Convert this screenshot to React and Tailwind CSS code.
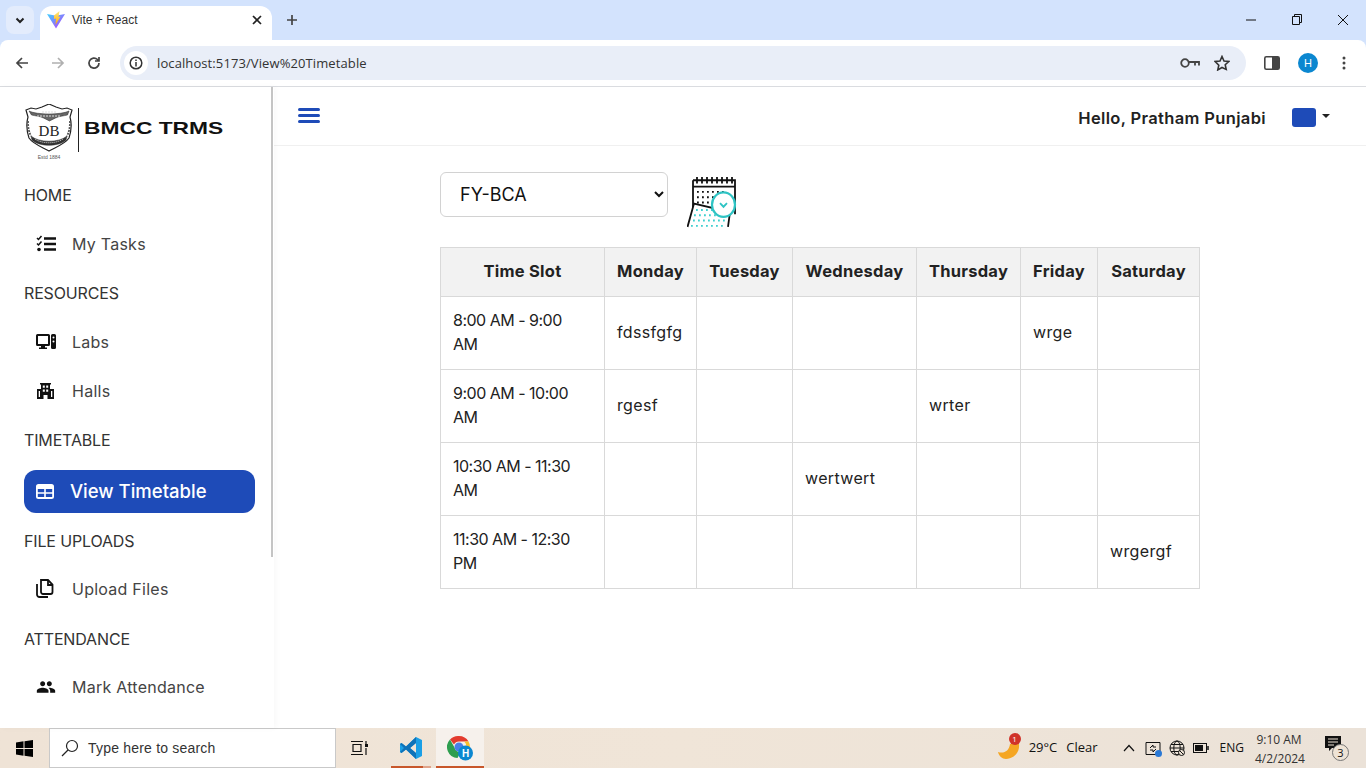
import React from "react";
import { MdPeople } from "react-icons/md";

const sans = "font-['Inter','Noto_Sans',sans-serif]";

const TaskIcon = () => (
  <svg width="20" height="18" viewBox="0 0 20 18" fill="none" stroke="#111">
    <path d="M1 3l1.5 1.5L5.5 1M1 8.5L2.5 10l3-3.5" strokeWidth="1.5" />
    <circle cx="3" cy="14.5" r="1.8" fill="#111" stroke="none" />
    <path d="M8 3.5h12M8 9h12M8 14.5h12" strokeWidth="2.4" />
  </svg>
);
const LabIcon = () => (
  <svg width="20" height="16" viewBox="0 0 20 16" fill="#111">
    <path fillRule="evenodd" d="M1.5 0h11A1.5 1.5 0 0 1 14 1.5v9a1.5 1.5 0 0 1-1.5 1.5H9v1.5h2V15H3v-1.500h2V12H1.500A1.500 1.500 0 0 1 0 10.500v-9A1.500 1.500 0 0 1 1.500 0zM2 2v8h10V2z" />
    <path fillRule="evenodd" d="M16.500 0h2A1.500 1.500 0 0 1 20 1.500v12a1.500 1.500 0 0 1-1.500 1.500h-2a1.500 1.500 0 0 1-1.500-1.500v-12A1.500 1.500 0 0 1 16.500 0zm1 2.500a1 1 0 1 0 0 2 1 1 0 0 0 0-2zm0 4a1 1 0 1 0 0 2 1 1 0 0 0 0-2z" />
  </svg>
);
const HallIcon = () => (
  <svg className="ml-[1px]" width="17" height="16" viewBox="0 0 17 16" fill="#111">
    <path fillRule="evenodd" d="M3 0h11v1.500h-1V6h4v10h-6.500v-4h-4v4H0V6h4V1.500H3zM5.800 2.500v2.300h2V2.500zm3.400 0v2.300h2V2.500zM5.800 6.500v2.300h2V6.500zm3.400 0v2.300h2V6.500zM1.700 8v6h1.300V8zm12.300 0v6h1.300V8z" />
  </svg>
);
const TableIcon = () => (
  <svg width="18" height="15" viewBox="0 0 18 15" fill="#fff">
    <path fillRule="evenodd" d="M2.500 0h13A2.500 2.500 0 0 1 18 2.500v10a2.500 2.500 0 0 1-2.500 2.500h-13A2.500 2.500 0 0 1 0 12.500v-10A2.500 2.500 0 0 1 2.500 0zM1.800 5v3.200h6.400V5zm8 0v3.200h6.400V5zM1.800 9.700V13h6.400V9.700zm8 0V13h6.400V9.700z" />
  </svg>
);
const FilesIcon = () => (
  <svg width="18" height="19" viewBox="0 0 18 19" fill="none" stroke="#111" strokeWidth="1.8">
    <path d="M5 1h7l4.500 4.500V13a2 2 0 0 1-2 2H7a2 2 0 0 1-2-2z" />
    <path d="M12 1v5h4.500" />
    <path d="M1 5v10.500A2.500 2.500 0 0 0 3.500 18H12" />
  </svg>
);

const Group = ({ children }) => (
  <div className="h-[49px] flex items-center pl-6 text-[16px] text-[#333] tracking-[-0.15px]">{children}</div>
);
const Item = ({ icon, children }) => (
  <div className="h-[49px] flex items-center pl-9 text-[16px] text-[#444] tracking-[0.25px]">
    <span className="w-9 flex items-center">{icon}</span>
    {children}
  </div>
);

const Crest = () => (
  <svg width="48" height="56" viewBox="0 0 48 56" fill="none" stroke="#222">
    <path d="M1 6l5-2 5 1 6-2 7-3 7 3 6 2 5-1 5 2-2 7c2 7 1 15-1 21-4 6-13 9-20 13C17 43 8 40 4 34 2 28 1 20 3 13z" strokeWidth="1.200" fill="#fff" />
    <path d="M4 7c8 4 32 4 40 0l-1.500 4c-4 1-8 1-12 3l-6 3-6-3c-4-2-8-2-12-3z" fill="#666" strokeWidth="0.500" />
    <path d="M17 8h14M12 12h24" stroke="#ddd" strokeWidth="1" strokeDasharray="2 1" />
    <text x="24" y="32" fontSize="15" fontFamily="Liberation Serif" fill="#222" stroke="none" textAnchor="middle">DB</text>
    <path d="M6 32c8 7 28 7 36 0l-1 4c-7 7-27 7-34 0z" fill="#333" strokeWidth="0.500" />
    <path d="M10 35c7 5 21 5 28 0" stroke="#ddd" strokeWidth="1" strokeDasharray="1 1" />
    <path d="M3 17c0 7 1 11 3 15M45 17c0 7-1 11-3 15" strokeWidth="1.800" stroke="#555" strokeDasharray="2 1" />
    <text x="24" y="55" fontSize="5" fill="#555" stroke="none" textAnchor="middle" fontFamily="Liberation Sans">Estd 1884</text>
  </svg>
);

const CalendarArt = () => (
  <svg className="block" width="50" height="52" viewBox="0 4 50 49" fill="none" preserveAspectRatio="none">
    <path d="M6 8h42v32" stroke="#111" strokeWidth="1.800" />
    <path d="M6 8v30M6 14h42" stroke="#111" strokeWidth="1.800" />
    <path d="M10 5v6M15 5v6M20 5v6M25 5v6M30 5v6M35 5v6M40 5v6M45 5v6" stroke="#111" strokeWidth="1.800" />
    <path d="M10 19h30M10 24h26M10 29h24M10 34h4" stroke="#111" strokeWidth="1.800" strokeDasharray="1.800 3.200" />
    <path d="M0.500 52L7 30l36 8-2 14" stroke="#111" strokeWidth="1.800" fill="#fff" />
    <path d="M9 36h28M7 41h32M6 46h33M4 51h34" stroke="#3fd0d0" strokeWidth="1.800" strokeDasharray="1.800 3.200" />
    <circle cx="36.500" cy="31" r="11.500" stroke="#2fc4c4" strokeWidth="2.200" fill="#fff" />
    <path d="M33 29.500l3.500 3.500 3.500-3.500" stroke="#2fc4c4" strokeWidth="1.800" />
  </svg>
);

const rows = [
  ["8:00 AM - 9:00 AM", "fdssfgfg", "", "", "", "wrge", ""],
  ["9:00 AM - 10:00 AM", "rgesf", "", "", "wrter", "", ""],
  ["10:30 AM - 11:30 AM", "", "", "wertwert", "", "", ""],
  ["11:30 AM - 12:30 PM", "", "", "", "", "", "wrgergf"],
];
const heads = ["Time Slot", "Monday", "Tuesday", "Wednesday", "Thursday", "Friday", "Saturday"];

const Favicon = () => (
  <svg width="18" height="18" viewBox="0 0 18 18">
    <defs>
      <linearGradient id="v1" x1="0" y1="0" x2="1" y2="1">
        <stop offset="0" stopColor="#41d1ff" />
        <stop offset="1" stopColor="#bd34fe" />
      </linearGradient>
      <linearGradient id="v2" x1="0" y1="0" x2="0" y2="1">
        <stop offset="0" stopColor="#ffea83" />
        <stop offset="1" stopColor="#ffa800" />
      </linearGradient>
    </defs>
    <path d="M0 3l8 1.500h2L18 3 9 17.500z" fill="url(#v1)" />
    <path d="M7 4.500L12.500 0l-1 6 2-.5L8.500 14l.5-6.500-2 .5z" fill="url(#v2)" />
  </svg>
);

const ChromeBar = () => (
  <div className="shrink-0 font-['Open_Sans','Noto_Sans',sans-serif]">
    <div className="h-10 bg-[#d3e3fd] flex items-end relative">
      <div className="absolute left-[6px] top-[6px] w-7 h-7 rounded-lg bg-[#e3ecfc] flex items-center justify-center">
        <svg width="12" height="12" viewBox="0 0 12 12" fill="none" stroke="#222" strokeWidth="2"><path d="M2.500 4.500L6 8l3.500-3.500" /></svg>
      </div>
      <div className="ml-10 w-[232px] h-[34px] bg-white rounded-t-xl flex items-center pl-[7px] pr-[10px] pb-[6px]">
        <Favicon />
        <span className="ml-[7px] text-[12px] text-[#333] font-['Liberation_Sans',sans-serif]">Vite + React</span>
        <svg className="ml-auto" width="10" height="10" viewBox="0 0 10 10" stroke="#222" strokeWidth="1.700"><path d="M1 1l8 8M9 1l-8 8" /></svg>
      </div>
      <svg className="ml-[14px] mb-[14px]" width="12" height="12" viewBox="0 0 12 12" stroke="#444" strokeWidth="1.700"><path d="M6 1v10M1 6h10" /></svg>
      <div className="ml-auto flex items-center mb-[13px]">
        <svg width="46" height="14" viewBox="0 0 46 14" stroke="#111"><path d="M18 7h10" /></svg>
        <svg width="46" height="14" viewBox="0 0 46 14" fill="none" stroke="#111"><path d="M18.500 3.500h7v8h-7zM20.500 3.500V1.500h7v8h-2" /></svg>
        <svg width="46" height="14" viewBox="0 0 46 14" stroke="#111"><path d="M18 2l10 10M28 2L18 12" /></svg>
      </div>
    </div>
    <div className="h-[47px] bg-[#d3e3fd] relative">
      <div className="h-[47px] bg-white rounded-t-lg border-b border-[#dadce0] flex items-center">
        <svg className="ml-[15px]" width="14" height="14" viewBox="0 0 14 14" fill="none" stroke="#444" strokeWidth="1.700"><path d="M13 7H2M7 2L2 7l5 5" /></svg>
        <svg className="ml-[22px]" width="14" height="14" viewBox="0 0 14 14" fill="none" stroke="#b0b0b0" strokeWidth="1.700"><path d="M1 7h11M7 2l5 5-5 5" /></svg>
        <svg className="ml-[22px]" width="14" height="14" viewBox="0 0 14 14" fill="none" stroke="#444" strokeWidth="1.700"><path d="M12 7a5 5 0 1 1-1.500-3.500L12 5M12 1v4H8" /></svg>
        <div className="ml-[19px] w-[1126px] h-[34px] rounded-full bg-[#e9eef8] flex items-center pl-1 pr-[16px]">
          <div className="w-6 h-6 rounded-full bg-white flex items-center justify-center">
            <svg width="14" height="14" viewBox="0 0 14 14" fill="none" stroke="#333" strokeWidth="1.500"><circle cx="7" cy="7" r="5.800" /><path d="M7 6v4.500M7 3.500v1.500" /></svg>
          </div>
          <span className="ml-[9px] mt-[1px] text-[13px] text-[#333] tracking-[0.1px]">localhost:5173/View%20Timetable</span>
          <svg className="ml-auto" width="20" height="12" viewBox="0 0 20 12" fill="none" stroke="#444" strokeWidth="1.800"><circle cx="5" cy="6" r="3.800" /><path d="M9 5h10v3.500M15 5v3.500" /></svg>
          <svg className="ml-[14px]" width="16" height="16" viewBox="0 0 16 16" fill="none" stroke="#333" strokeWidth="1.600"><path d="M8 1.500l2 4.500 4.800.5-3.600 3.200 1 4.700L8 12.500l-4.200 2.400 1-4.700L1.200 6.500 6 6z" /></svg>
        </div>
        <svg className="ml-[18px]" width="16" height="14" viewBox="0 0 16 14"><rect x="0.800" y="0.800" width="14.400" height="12.400" rx="1.500" fill="#fff" stroke="#444" strokeWidth="1.600" /><rect x="8" y="1" width="7" height="12" fill="#444" /></svg>
        <div className="ml-[18px] w-5 h-5 rounded-full bg-[#0b87d0] flex items-center justify-center text-white text-[11px] font-['Liberation_Sans',sans-serif]">H</div>
        <svg className="ml-[24px]" width="4" height="14" viewBox="0 0 4 14" fill="#444"><circle cx="2" cy="2" r="1.500" /><circle cx="2" cy="7" r="1.500" /><circle cx="2" cy="12" r="1.500" /></svg>
      </div>
    </div>
  </div>
);

const Sidebar = () => (
  <aside className="w-[274px] shrink-0 h-full bg-white relative overflow-hidden shadow-[2px_0_6px_rgba(0,0,0,0.03)]">
    <div className="absolute right-[1px] top-0 w-[2px] h-[470px] bg-[#c4c4c4]" />
    <div className="h-[83px] flex items-start pl-[25px] pt-[17px]">
      <Crest />
      <div className="ml-[5px] mt-[4px] w-px h-[44px] bg-[#222]" />
      <span className="ml-[5px] mt-[15px] text-[17px] leading-[20px] font-bold text-[#111] font-['Liberation_Sans',sans-serif] scale-x-[1.34] origin-left whitespace-nowrap">BMCC TRMS</span>
    </div>
    <Group>HOME</Group>
    <Item icon={<TaskIcon />}>My Tasks</Item>
    <Group>RESOURCES</Group>
    <Item icon={<LabIcon />}>Labs</Item>
    <Item icon={<HallIcon />}>Halls</Item>
    <Group>TIMETABLE</Group>
    <div className="ml-6 mt-[6px] mb-[3px] w-[231px] h-[43px] rounded-xl bg-[#1e4bb8] flex items-center pl-3 text-white text-[18.500px] font-medium">
      <span className="w-[34px] flex items-center"><TableIcon /></span>
      View Timetable
    </div>
    <Group>FILE UPLOADS</Group>
    <div className="-mt-[1px]"><Item icon={<FilesIcon />}>Upload Files</Item></div>
    <div className="mt-[1px]"><Group>ATTENDANCE</Group></div>
    <div className="-mt-[1px]"><Item icon={<MdPeople size={20} color="#111" />}>Mark Attendance</Item></div>
  </aside>
);

const Main = () => (
  <main className="flex-1 min-w-0 h-full bg-white flex flex-col">
    <header className="h-[59px] shrink-0 border-b border-[#f0f0f0] flex items-center pl-[24px] pr-[36px]">
      <svg width="22" height="16" viewBox="0 0 22 16" fill="#1e4bb8"><rect width="22" height="3" rx="1.500" /><rect y="6" width="22" height="3" rx="1.500" /><rect y="12" width="22" height="3" rx="1.500" /></svg>
      <span className="ml-auto mt-[4px] text-[16.500px] font-semibold text-[#222] tracking-[0.35px]">Hello, Pratham Punjabi</span>
      <span className="ml-[26px] w-6 h-[19px] rounded-[3px] bg-[#1e4bb8] mt-[2px]" />
      <span className="ml-[6px] w-0 h-0 border-x-[4px] border-x-transparent border-t-[4px] border-t-[#222]" />
    </header>
    <div className="w-[760px] mx-auto pt-[26px]">
      <div className="flex items-start">
        <select defaultValue="FY-BCA" className={`w-[228px] h-[45px] rounded-md border border-[#d2d2d2] bg-white pl-[15px] pr-1 text-[18px] text-[#111] ${sans}`}>
          <option>FY-BCA</option>
          <option>SY-BCA</option>
          <option>TY-BCA</option>
        </select>
        <span className="ml-[19px] mt-[4px] block"><CalendarArt /></span>
      </div>
      <table className="mt-[19px] w-[759px] table-fixed border-collapse text-[16px] text-[#222]">
        <colgroup>
          <col className="w-[164px]" /><col className="w-[92px]" /><col className="w-[96px]" /><col className="w-[124px]" /><col className="w-[104px]" /><col className="w-[77px]" /><col className="w-[102px]" />
        </colgroup>
        <thead>
          <tr className="h-[49px] bg-[#f2f2f2]">
            {heads.map((h) => (
              <th key={h} className="border border-[#d9d9d9] font-bold text-center text-[16.500px] px-1 pb-[2px] whitespace-nowrap tracking-[0.25px]">{h}</th>
            ))}
          </tr>
        </thead>
        <tbody>
          {rows.map((r) => (
            <tr key={r[0]} className="h-[73px]">
              {r.map((c, i) => (
                <td key={i} className={`border border-[#d9d9d9] pl-3 pb-[2px] leading-6 align-middle ${i === 0 ? "pr-6 tracking-[-0.5px]" : "pr-3 tracking-[0.35px]"}`}>{c}</td>
              ))}
            </tr>
          ))}
        </tbody>
      </table>
    </div>
  </main>
);

const Taskbar = () => (
  <div className="h-10 shrink-0 bg-gradient-to-r from-[#efe3d6] via-[#f0e5d8] to-[#ebe2d8] flex items-stretch font-['Open_Sans','Noto_Sans',sans-serif] text-[#111]">
    <div className="w-[49px] flex items-center justify-center">
      <svg width="17" height="17" viewBox="0 0 17 17" fill="#000"><path d="M0 2.500L7.500 1.300v6.700H0zM8.500 1.200L17 0v8H8.500zM0 9h7.500v6.700L0 14.500zM8.500 9H17v8l-8.500-1.200z" /></svg>
    </div>
    <div className="w-[287px] bg-white border border-[#c9c9c9] flex items-center pl-[11px]">
      <svg width="18" height="18" viewBox="0 0 18 18" fill="none" stroke="#222" strokeWidth="1.200"><circle cx="11" cy="7" r="5.500" /><path d="M7 11l-6 6" /></svg>
      <span className="ml-[9px] text-[14px] text-[#333] tracking-[0.2px] font-['Liberation_Sans',sans-serif]">Type here to search</span>
    </div>
    <div className="w-[49px] flex items-center justify-center pr-[4px]">
      <svg width="18" height="16" viewBox="0 0 18 16" fill="none" stroke="#111" strokeWidth="1.200"><path d="M1 1.500h12M1 14.500h12M3 4.500h8v7H3zM16 1v3M16 8v7" /><rect x="15" y="4" width="3" height="3" fill="#111" stroke="none" /></svg>
    </div>
    <div className="w-[40px] ml-[6px] relative flex items-center justify-center">
      <svg width="24" height="24" viewBox="0 0 24 24">
        <path d="M17 1l6 3v16l-6 3L7 13.500 2.500 17 1 16v-8l1.500-1L7 10.500zM17 7l-6 5 6 5z" fill="#1a9fe6" />
        <path d="M1 8l1.500-1L7 10.500 17 1v6l-6 5 6 5v6L7 13.500 2.500 17 1 16l4-4z" fill="#0f72b8" />
      </svg>
      <span className="absolute bottom-0 left-0 w-[32px] h-[2px] bg-[#c8572b]" />
      <span className="absolute bottom-0 right-0 w-[8px] h-[2px] bg-[#e0a48a]" />
    </div>
    <div className="w-[48px] ml-[5px] bg-[#f6f1ec] relative flex items-center justify-center">
      <svg width="26" height="26" viewBox="0 0 26 26">
        <path d="M12 1a11 11 0 0 1 9.500 5.500H12a5.500 5.500 0 0 0-5 3L3 4.500A11 11 0 0 1 12 1z" fill="#e33b2e" />
        <path d="M21.500 6.500A11 11 0 0 1 13 23l4.500-8a5.500 5.500 0 0 0-.5-8.500z" fill="#fbc02d" />
        <path d="M3 4.500l4.500 8a5.500 5.500 0 0 0 6 4.500L10.500 23A11 11 0 0 1 3 4.500z" fill="#2e9e4f" />
        <circle cx="12" cy="12" r="4.500" fill="#4a7fe8" />
        <circle cx="18.500" cy="18" r="7.500" fill="#0b87d0" />
        <text x="18.500" y="21.500" fontSize="10" fontWeight="bold" fill="#fff" textAnchor="middle" fontFamily="Liberation Sans">H</text>
      </svg>
      <span className="absolute bottom-0 inset-x-0 h-[2px] bg-[#c8572b]" />
    </div>
    <div className="ml-auto flex items-center pr-[17px]">
      <span className="relative w-[24px] h-[24px] mr-[8px]">
        <svg width="24" height="24" viewBox="0 0 24 24"><path d="M1 16c6 2 11-1 12-8h9c1 8-5 15-13 15-4 0-7-3-8-7z" fill="#f5a623" /></svg>
        <span className="absolute -top-[3px] right-0 w-[12px] h-[12px] rounded-full bg-[#d0332a] text-white text-[8px] leading-[12px] text-center">1</span>
      </span>
      <span className="text-[13px]">29°C</span>
      <span className="ml-[9px] text-[13px]">Clear</span>
      <svg className="ml-[25px]" width="12" height="8" viewBox="0 0 12 8" fill="none" stroke="#111" strokeWidth="1.200"><path d="M1 7l5-5.500L11 7" /></svg>
      <span className="relative ml-[10px] w-[16px] h-[15px]">
        <svg width="16" height="15" viewBox="0 0 16 15" fill="none" stroke="#111"><path d="M1 1.500h14v12H1zM5 7l3-3v2h3M11 8l-3 3V9H5" /></svg>
        <span className="absolute -right-[1px] -bottom-[1px] w-[7px] h-[7px] rounded-full bg-[#2a79d6]" />
      </span>
      <svg className="ml-[8px]" width="16" height="16" viewBox="0 0 16 16" fill="none" stroke="#111"><circle cx="8" cy="8" r="7" /><ellipse cx="8" cy="8" rx="3.200" ry="7" /><path d="M1 8h14M2 4.500h12M2 11.500h12" /><circle cx="12.500" cy="12.500" r="3" fill="#eee3d5" /><path d="M10.500 10.500l4 4" /></svg>
      <svg className="ml-[8px]" width="16" height="10" viewBox="0 0 16 10" fill="none" stroke="#111"><rect x="0.500" y="0.500" width="13" height="9" /><rect x="2" y="2" width="8" height="6" fill="#111" stroke="none" /><path d="M15 3v4" strokeWidth="1.500" /></svg>
      <span className="ml-[11px] text-[12px]">ENG</span>
      <span className="ml-[11px] w-[48px] pt-[1px] text-[12px] leading-[19px] text-center text-[#333]">9:10 AM<br />4/2/2024</span>
      <span className="relative ml-[22px] w-[24px] h-[26px]">
        <svg className="mt-[1px]" width="16" height="16" viewBox="0 0 16 16" fill="#111"><path d="M0 0h16v12H7l-3 3v-3H0z" /><path d="M3 3h10M3 6h10M3 9h6" stroke="#eee3d5" /></svg>
        <span className="absolute right-0 bottom-0 w-[17px] h-[17px] rounded-full bg-[#eee3d5] border border-[#777] text-[11px] leading-[15px] text-center">3</span>
      </span>
    </div>
  </div>
);

export default function App() {
  return (
    <div className={`w-[1366px] h-[768px] overflow-hidden flex flex-col bg-white ${sans}`}>
      <ChromeBar />
      <div className="flex-1 min-h-0 flex">
        <Sidebar />
        <Main />
      </div>
      <Taskbar />
    </div>
  );
}
